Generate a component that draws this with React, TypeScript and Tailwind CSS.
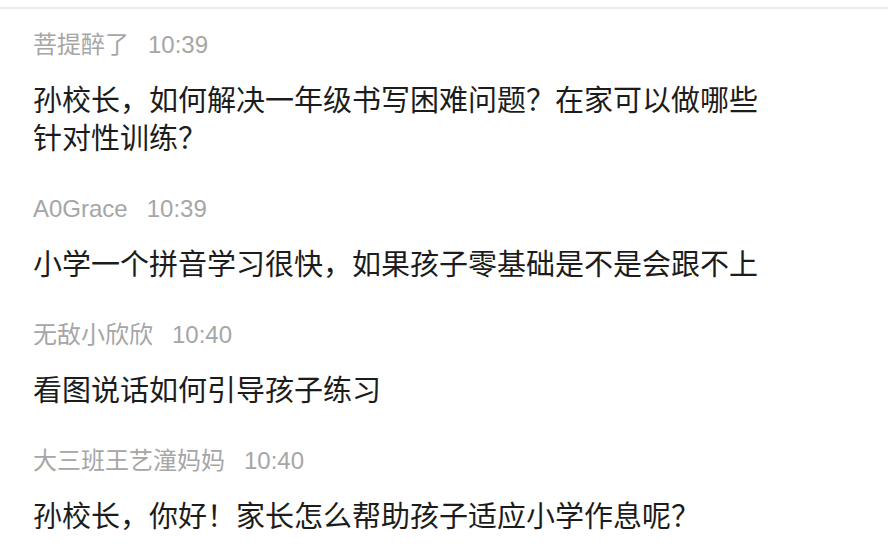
const comments = [
  { name: "菩提醉了", time: "10:39", text: "孙校长，如何解决一年级书写困难问题？在家可以做哪些针对性训练？" },
  { name: "A0Grace", time: "10:39", text: "小学一个拼音学习很快，如果孩子零基础是不是会跟不上" },
  { name: "无敌小欣欣", time: "10:40", text: "看图说话如何引导孩子练习" },
  { name: "大三班王艺潼妈妈", time: "10:40", text: "孙校长，你好！家长怎么帮助孩子适应小学作息呢？" },
]

export default function App() {
  return (
    <div className="w-[888px] h-[556px] overflow-hidden bg-white font-['Noto_Sans_CJK_SC',sans-serif]">
      <div className="h-[7px]" />
      {/* COMMENT LIST */}
      <div className="border-t-2 border-[#ebebeb] px-[33px] pt-[23px]">
        {comments.map((c) => (
          <div key={c.name} className="mb-[41px]">
            <div className="flex items-center gap-[19px] pt-[1px] font-['Liberation_Sans','Noto_Sans_CJK_SC',sans-serif] text-[24px] leading-[24px] text-[#a6a6a6]">
              <span>{c.name}</span>
              <span>{c.time}</span>
            </div>
            <p className="mt-[22px] max-w-[738px] text-[29px] leading-[38px] text-[#1c1c1c]">{c.text}</p>
          </div>
        ))}
      </div>
    </div>
  )
}
